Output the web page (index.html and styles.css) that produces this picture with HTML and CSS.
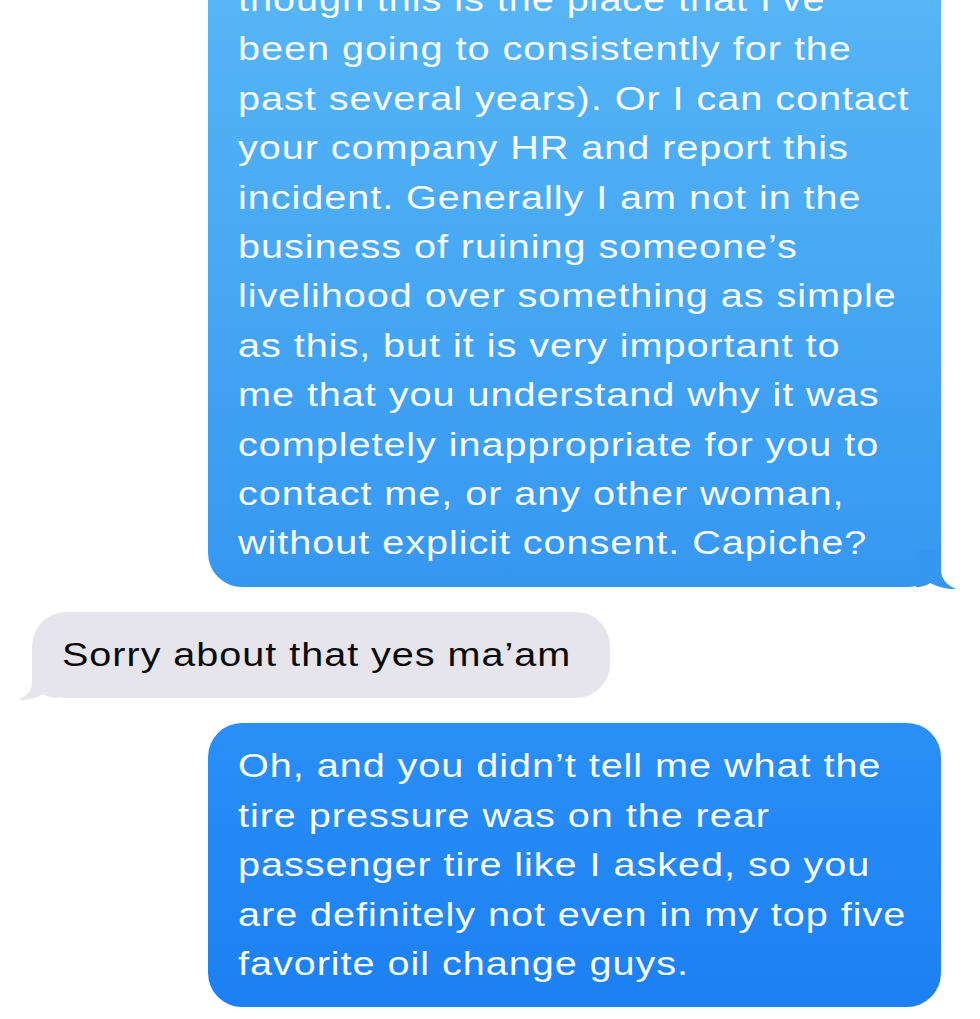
FILE: index.html
```html
<!DOCTYPE html>
<html lang="en">
<head>
<meta charset="utf-8">
<title>Messages</title>
<link rel="stylesheet" href="styles.css">
</head>
<body>
<div class="thread">
  <div class="msg sent sent-top">
    <p class="text"><span class="lines">though this is the place that I’ve<br>been going to consistently for the<br>past several years). Or I can contact<br>your company HR and report this<br>incident. Generally I am not in the<br>business of ruining someone’s<br>livelihood over something as simple<br>as this, but it is very important to<br>me that you understand why it was<br>completely inappropriate for you to<br>contact me, or any other woman,<br>without explicit consent. Capiche?</span></p>
    <svg class="tail tail-right" width="40" height="40" viewBox="0 0 40 40"><path d="M0 0 H25 V20 C25 28 30 35 40 39 C32 39.5 22 37 14 33 C11 35 7 37 0 37 Z"/></svg>
  </div>
  <div class="msg received">
    <p class="text"><span class="lines">Sorry about that yes ma’am</span></p>
    <svg class="tail tail-left" width="40" height="40" viewBox="0 0 40 40"><path d="M40 0 H14 V20 C14 28 10 35 0 39 C8 39.5 18 37 26 33 C29 35 33 37 40 37 Z"/></svg>
  </div>
  <div class="msg sent sent-bottom">
    <p class="text"><span class="lines">Oh, and you didn’t tell me what the<br>tire pressure was on the rear<br>passenger tire like I asked, so you<br>are definitely not even in my top five<br>favorite oil change guys.</span></p>
  </div>
</div>
</body>
</html>
```
FILE: styles.css
```css
html, body {
  margin: 0;
  padding: 0;
  background: #ffffff;
}
body {
  width: 980px;
  height: 1019px;
  overflow: hidden;
  font-family: "Liberation Sans", Arial, sans-serif;
}
.thread {
  display: flex;
  flex-direction: column;
  gap: 25px;
}
.msg {
  position: relative;
  border-radius: 34px;
}
.text {
  margin: 0;
  padding: 18px 30px 19px 30px;
  font-size: 33px;
  line-height: 49.4px;
  letter-spacing: 0.8px;
  white-space: nowrap;
}
.lines {
  display: inline-block;
  vertical-align: top;
  transform: scaleX(1.2);
  transform-origin: left center;
}
.sent {
  align-self: flex-end;
  width: 733px;
  margin-right: 39px;
  color: #f7fbff;
}
.sent-top {
  margin-top: -43px;
  background: linear-gradient(180deg, #58b7f6 0%, #47a8f4 50%, #3597f1 100%);
}
.sent-top .tail path { fill: #3597f1; }
.sent-bottom {
  background: linear-gradient(180deg, #2a8ff6 0%, #1c80f3 100%);
}
.received {
  align-self: flex-start;
  width: 578px;
  margin-left: 32px;
  background: #e6e5eb;
  color: #0a0a0a;
}
.received .tail path { fill: #e6e5eb; }
.tail {
  position: absolute;
  bottom: -3px;
}
.tail-right { right: -15px; }
.tail-left { left: -14px; }
```
